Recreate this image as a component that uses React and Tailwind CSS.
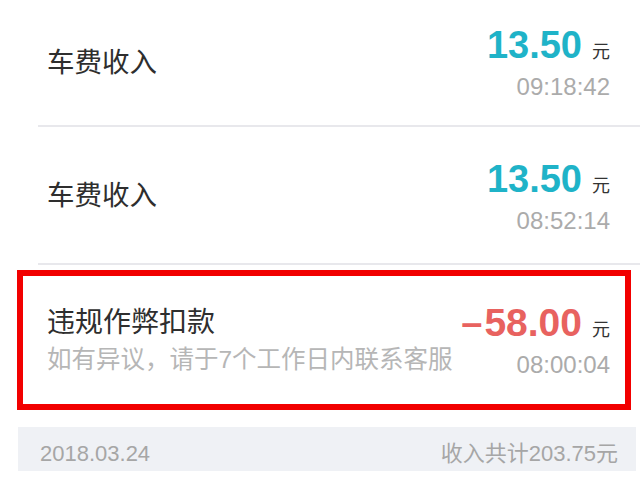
import React from "react";

const rows = [
  { title: "车费收入", amount: "13.50", time: "09:18:42" },
  { title: "车费收入", amount: "13.50", time: "08:52:14" },
];

function Amount({ value, time, red }) {
  return (
    <div className="flex flex-col items-end">
      <div className="flex items-baseline">
        {red && <span className="mr-[2px] text-[38px] leading-[40px] font-bold text-[#e8625f]">–</span>}
        <span
          className={
            red
              ? "text-[39px] leading-[40px] font-bold text-[#e8625f]"
              : "text-[38px] leading-[40px] font-bold text-[#1fb3c8]"
          }
        >
          {value}
        </span>
        <span className="ml-[10px] text-[18px] text-[#333]">元</span>
      </div>
      <span className="mt-[8px] text-[24px] leading-[26px] text-[#ababab]">{time}</span>
    </div>
  );
}

export default function App() {
  return (
    <div
      className="w-[640px] h-[478px] overflow-hidden bg-white"
      style={{ fontFamily: '"Liberation Sans", "Noto Sans CJK SC", sans-serif' }}
    >
      {/* income rows */}
      {rows.map((r, i) => (
        <div key={i}>
          <div
            className={
              i === 0
                ? "h-[125px] flex items-center justify-between pl-[47px] pr-[30px]"
                : "h-[136px] flex items-center justify-between pl-[47px] pr-[30px] pt-[2px]"
            }
          >
            <span className="text-[27.5px] text-[#2e2e2e]">{r.title}</span>
            <Amount value={r.amount} time={r.time} />
          </div>
          <div className="ml-[38px] h-[2px] bg-[#e8e8ec]" />
        </div>
      ))}

      {/* highlighted deduction */}
      <div className="mt-[5px] ml-[17px] w-[614px] h-[140px] border-[6px] border-[#f20000] flex items-center justify-between pl-[24px] pr-[15px]">
        <div className="flex flex-col">
          <span className="text-[28px] leading-[34px] text-[#2e2e2e]">违规作弊扣款</span>
          <span className="mt-[6px] text-[24.5px] leading-[28px] text-[#b6b6b6]">
            如有异议，请于7个工作日内联系客服
          </span>
        </div>
        <Amount value="58.00" time="08:00:04" red />
      </div>

      {/* day summary */}
      <div className="mt-[17px] ml-[18px] w-[618px] h-[44px] bg-[#eff1f5] flex items-center justify-between pl-[22px] pr-[18px] pt-[8px]">
        <span className="text-[22px] text-[#a6a6a6]">2018.03.24</span>
        <span className="text-[22px] text-[#a6a6a6]">收入共计203.75元</span>
      </div>
    </div>
  );
}
